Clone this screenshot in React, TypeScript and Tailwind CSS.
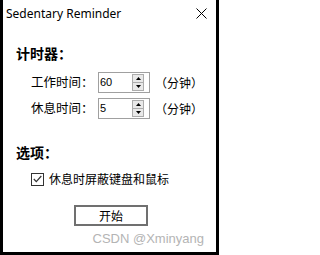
import { useState } from 'react';

const cjk = "font-['Microsoft_YaHei','Noto_Sans_CJK_SC',sans-serif]";

function Spinner() {
  return (
    <div className="flex h-full w-[12px] flex-col border border-[#acacac] bg-[#e9e9e9]">
      <div className="flex flex-1 items-center justify-center border-b border-[#acacac]">
        <svg width="5" height="3" viewBox="0 0 5 3">
          <path d="M2.5 0 L5 3 L0 3 Z" fill="#000" />
        </svg>
      </div>
      <div className="flex flex-1 items-center justify-center">
        <svg width="5" height="3" viewBox="0 0 5 3">
          <path d="M0 0 L5 0 L2.5 3 Z" fill="#000" />
        </svg>
      </div>
    </div>
  );
}

function TimeRow({ label, value }: { label: string; value: string }) {
  return (
    <div className="flex h-[21px] items-center pl-[15px]">
      <span className={`${cjk} w-[67px] text-[12.5px] leading-none text-black`}>{label}</span>
      <div className="flex h-[21px] w-[52px] items-center border border-[#a0a0a0] bg-white py-[1px] pr-[5px] pl-[1px]">
        <span className="flex-1 font-['Liberation_Sans',Arial,sans-serif] text-[11px] leading-none text-black">
          {value}
        </span>
        <Spinner />
      </div>
      <span className={`${cjk} ml-[5px] text-[12px] leading-none text-black`}>（分钟）</span>
    </div>
  );
}

export default function App() {
  const [checked, setChecked] = useState(true);

  return (
    <div className="flex h-[255px] w-[219px] flex-col bg-black px-[3px] pb-[3px]">
      <div className="flex flex-1 flex-col bg-white">
        {/* title bar */}
        <div className="flex h-[27px] items-center justify-between pr-[9px] pl-[3px]">
          <span className="font-['Noto_Sans',sans-serif] text-[12px] leading-none text-black">Sedentary Reminder</span>
          <svg width="11" height="11" viewBox="0 0 11 11">
            <path d="M0.5 0.5 L10.5 10.5 M10.5 0.5 L0.5 10.5" stroke="#000" strokeWidth="1" />
          </svg>
        </div>

        <div className="flex flex-col pl-[13px]">
          <div className={`${cjk} mt-[16px] h-[20px] text-[14px] leading-[20px] font-bold text-black`}>计时器：</div>

          <div className="mt-[9px] flex flex-col gap-[5px]">
            <TimeRow label="工作时间：" value="60" />
            <TimeRow label="休息时间：" value="5" />
          </div>

          <div className={`${cjk} mt-[23px] h-[20px] text-[14px] leading-[20px] font-bold text-black`}>选项：</div>

          <label className="mt-[7px] flex h-[20px] cursor-pointer items-center pl-[15px]">
            <span
              onClick={() => setChecked(!checked)}
              className="flex h-[13px] w-[13px] items-center justify-center border border-[#333333] bg-white"
            >
              {checked && (
                <svg width="9" height="8" viewBox="0 0 9 8">
                  <path d="M0.8 4 L3.3 6.6 L8.3 1" fill="none" stroke="#333" strokeWidth="1.2" />
                </svg>
              )}
            </span>
            <span className={`${cjk} ml-[5px] text-[12px] leading-none text-black`}>休息时屏蔽键盘和鼠标</span>
          </label>

          <button
            className={`${cjk} mt-[16px] ml-[58px] flex h-[21px] w-[74px] items-center justify-center border-2 border-[#707070] bg-white text-[12px] leading-none text-black`}
          >
            开始
          </button>
        </div>

        <div className="mt-[6px] flex justify-end pr-[12px]">
          <span className="font-['Liberation_Sans',Arial,sans-serif] text-[13px] leading-[14px] text-[#b4b4b4]">
            CSDN @Xminyang
          </span>
        </div>
      </div>
    </div>
  );
}
